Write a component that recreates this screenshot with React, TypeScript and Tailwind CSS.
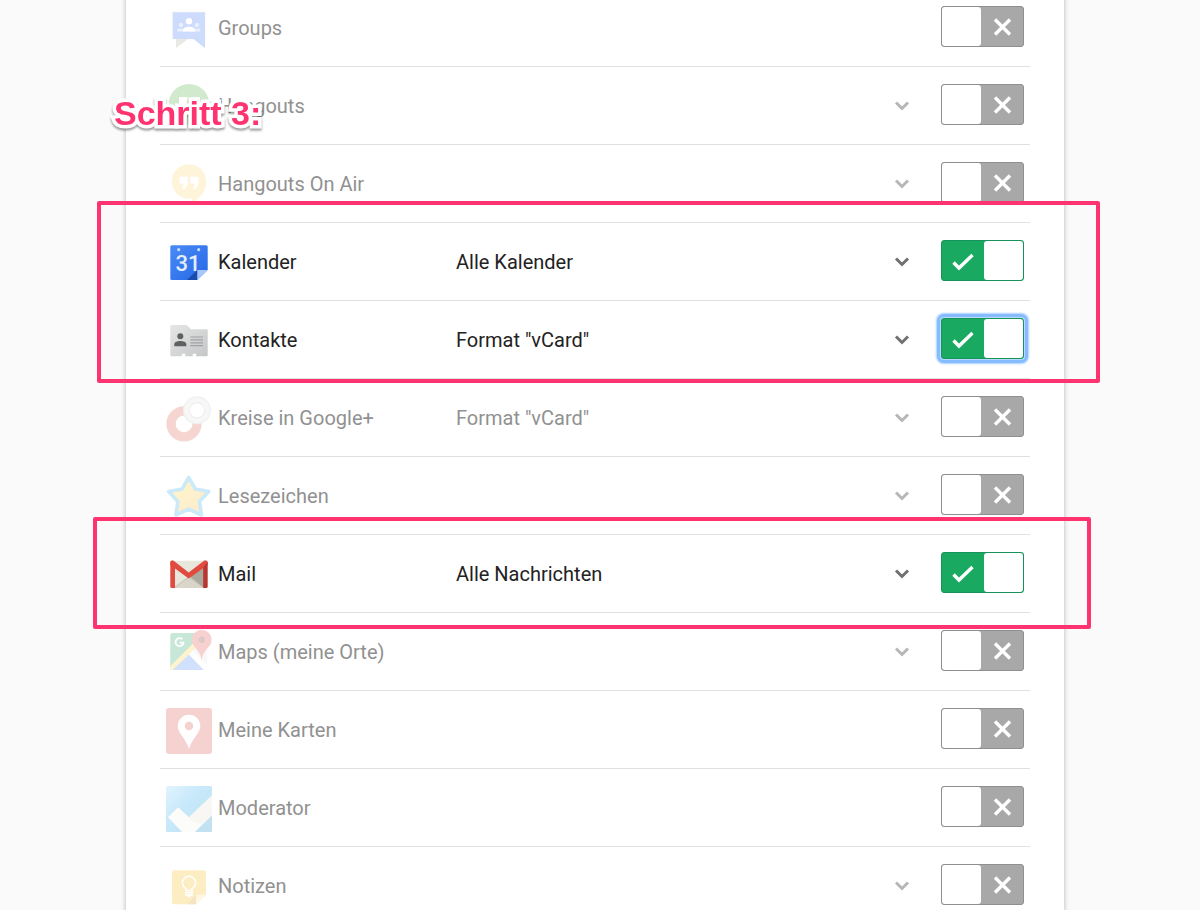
import React, { useState } from 'react';

interface Product {
  id: string;
  name: string;
  detail?: string;
  expandable: boolean;
  icon: React.ReactNode;
}

const GroupsIcon = () => (
  <>
    <path d="M5.500 4.500h35v30h-35z" fill="#d8d5b8" opacity=".25" />
    <path d="M10 33h12l-12 9z" fill="#a5a59c" />
    <path d="M6.700 6.300H39v36L27.500 33H6.700z" fill="#3b78f5" />
    <circle cx="23" cy="15.300" r="3.200" fill="#fff" />
    <circle cx="15" cy="18.900" r="2.200" fill="#fff" opacity=".6" />
    <circle cx="31" cy="18.900" r="2.200" fill="#fff" opacity=".6" />
    <path d="M11.300 22.800h23v2.600h-23z" fill="#fff" opacity=".6" />
    <path d="M17 25.400v-1.400c0-4.500 12-4.500 12 0v1.400z" fill="#fff" />
  </>
);

const HangoutsIcon = () => (
  <>
    <path d="M23 0a20.500 20.500 0 0 1 20.500 20.500C43.500 32 35 41 26 46v-5h-3A20.500 20.500 0 0 1 23 0z" fill="#4caf3c" />
    <path d="M13 13h8.500v9L18 28h-4l3-6h-4zM25 13h8.500v9L30 28h-4l3-6h-4z" fill="#fff" />
  </>
);

const OnAirIcon = () => (
  <>
    <path d="M23 2.200a17.300 17.300 0 0 1 17.300 17.300C40.300 29 34 37 26 41v-4.200h-3A17.300 17.300 0 0 1 23 2.200z" fill="#fcd670" />
    <path d="M13.500 14.700h8.300v7l-2.800 5h-3l2-5h-4.500zM24.200 14.700h8.300v7l-2.800 5h-3l2-5h-4.500z" fill="#fff" />
  </>
);

const CalendarIcon = () => (
  <>
    <defs>
      <linearGradient id="calendarBody" x1="0" y1="0" x2="1" y2="1">
        <stop offset="0" stopColor="#4a8af6" />
        <stop offset="1" stopColor="#2468e6" />
      </linearGradient>
    </defs>
    <path d="M5.800 5.300h34.400a1.500 1.500 0 0 1 1.500 1.500V30L31.300 40H5.800a1.500 1.500 0 0 1-1.500-1.500V6.800a1.500 1.500 0 0 1 1.500-1.500z" fill="url(#calendarBody)" />
    <circle cx="12.700" cy="9.700" r="1.600" fill="#c5dafc" />
    <circle cx="32.700" cy="9.700" r="1.600" fill="#c5dafc" />
    <text x="22" y="31" textAnchor="middle" fontSize="22" fontWeight="500" fontFamily="Roboto, sans-serif" fill="#e4edfc">31</text>
    <path d="M31.300 30v10H21z" fill="#1a4cad" />
    <path d="M31.300 30h10.400L31.300 40z" fill="#a9c7fa" />
  </>
);

const ContactsIcon = () => (
  <>
    <defs>
      <linearGradient id="contactsBody" x1="0" y1="0" x2="1" y2="1">
        <stop offset="0" stopColor="#e6e6e6" />
        <stop offset="1" stopColor="#c4c6c7" />
      </linearGradient>
    </defs>
    <path d="M5.500 7h15.200l4.300 4.300h15.500a1.200 1.200 0 0 1 1.200 1.200v24.600a1.200 1.200 0 0 1-1.200 1.200H30.200v-2.600h-3.400v2.600h-7.600v-2.600h-3.400v2.600H5.500a1.200 1.200 0 0 1-1.200-1.200V8.200A1.200 1.200 0 0 1 5.500 7z" fill="url(#contactsBody)" />
    <circle cx="14.300" cy="18.300" r="3" fill="#606060" />
    <path d="M8.300 28.300v-2c0-4.400 12-4.400 12 0v2z" fill="#606060" />
    <path d="M24.300 19H37M24.300 21.900H37M24.300 24.800H37M24.300 27.700H37" stroke="#a0a2a3" strokeWidth="1.200" />
  </>
);

const CirclesIcon = () => (
  <>
    <circle cx="18" cy="28.300" r="13" fill="none" stroke="#a9a9a9" strokeWidth="9" />
    <circle cx="18" cy="27.700" r="13" fill="none" stroke="#dc5a48" strokeWidth="9" />
    <circle cx="31" cy="14.300" r="14" fill="#c4c4c4" />
    <circle cx="31" cy="14.300" r="12.800" fill="#e3e3e3" />
    <circle cx="31" cy="14.300" r="8" fill="#b8b8b8" />
    <circle cx="31" cy="14.300" r="7" fill="#fff" />
  </>
);

const StarIcon = () => (
  <>
    <defs>
      <linearGradient id="starFill" x1="0" y1="0" x2="1" y2="1">
        <stop offset="0" stopColor="#ffe12c" />
        <stop offset="1" stopColor="#fbb040" />
      </linearGradient>
    </defs>
    <path
      d="M22.700 3.500L29.200 14.900L42.700 17.500L33.500 27.400L35.500 41L22.700 35.200L9.900 41L11.900 27.400L2.700 17.500L16.200 14.900z"
      fill="url(#starFill)"
      stroke="#2fb0e8"
      strokeWidth="3.6"
      strokeLinejoin="round"
    />
  </>
);

const MailIcon = () => (
  <>
    <path d="M6 8.700h34V36H6z" fill="#e9e6dc" />
    <path d="M22.700 24L38 14v22z" fill="#aaa99d" />
    <path d="M7.500 36l15.200-11L38 36z" fill="#d9d6c9" />
    <path d="M7.500 36l15.200-11L38 36" fill="none" stroke="#b9b6a9" strokeWidth=".7" />
    <path d="M4.300 10a1.500 1.500 0 0 1 1.500-1.500h1.500L22.700 20.500 38.300 8.500h1.900a1.500 1.500 0 0 1 1.500 1.500v3L22.700 26.500 4.300 13z" fill="#e04a3f" />
    <path d="M4.300 10l4.700 5v21H5.800a1.500 1.500 0 0 1-1.500-1.500z" fill="#e04a3f" />
    <path d="M41.700 10L37.200 15.500V36h3a1.500 1.500 0 0 0 1.500-1.500z" fill="#b93530" />
  </>
);

const MapsIcon = () => (
  <>
    <defs>
      <clipPath id="mapsSquare">
        <rect x="4.300" y="3" width="37" height="37" rx="2.500" />
      </clipPath>
    </defs>
    <g clipPath="url(#mapsSquare)">
      <path d="M4 3h38v37H4z" fill="#e6e6e6" />
      <path d="M4 3h37L4 40z" fill="#23a566" />
      <path d="M4 36.500L29 11.500l2 5L7 40H4z" fill="#fdd23c" />
      <path d="M6.500 40L23 24.500 38 40z" fill="#4a86f7" />
      <path d="M23 24.500l4-4L42 36v4h-4z" fill="#fff" />
    </g>
    <path d="M16.300 9.300a4 4 0 1 0 1.200 3.400h-3.800" fill="none" stroke="#fff" strokeWidth="1.800" />
    <path d="M35.700-.2a9.900 9.900 0 0 1 9.900 9.900c0 8-8.400 9-9.900 21-1.500-12-9.900-13-9.900-21a9.900 9.900 0 0 1 9.900-9.900z" fill="#e04c43" />
    <circle cx="35.700" cy="9.700" r="3.200" fill="#7e2d28" />
  </>
);

const MyMapsIcon = () => (
  <>
    <rect width="46" height="46" rx="3" fill="#db4a45" />
    <path d="M23 6.700a11.300 11.300 0 0 1 11.300 11.300c0 7.500-8.800 13-11.300 23-2.500-10-11.300-15.500-11.300-23A11.300 11.300 0 0 1 23 6.700z" fill="#fff" />
    <circle cx="23" cy="18" r="4.200" fill="#db4a45" />
  </>
);

const ModeratorIcon = () => (
  <>
    <defs>
      <linearGradient id="moderatorSky" x1="0" y1="0" x2="1" y2="1">
        <stop offset="0" stopColor="#8fd4fb" />
        <stop offset=".4" stopColor="#26abf0" />
        <stop offset="1" stopColor="#0a86c4" />
      </linearGradient>
    </defs>
    <rect width="46" height="46" rx="1.500" fill="url(#moderatorSky)" />
    <path d="M2 31.300l10-10 11 10L46 9.500V29L29 46H16z" fill="#f6f5ef" />
    <path d="M23 31.300L46 9.500V29l-8 8c-6 1.500-11 0-15-5.700z" fill="#e4e2d6" />
  </>
);

const KeepIcon = () => (
  <>
    <path d="M8 6.300h30a2 2 0 0 1 2 2v22.400l-10 9.600H8a2 2 0 0 1-2-2v-30a2 2 0 0 1 2-2z" fill="#f9b916" />
    <path d="M30 30.700v9.600h-9z" fill="#dd9a10" />
    <path d="M30 30.700h10l-10 9.600z" fill="#fde08a" />
    <path
      d="M20 26.500v-1.800a6.600 6.600 0 1 1 6 0v1.800zM20 26.500v4.500h6v-4.500M20 28.800h6M21.500 32.500h3"
      fill="none"
      stroke="#fff"
      strokeWidth="1.500"
    />
  </>
);

const products: Product[] = [
  { id: 'groups', name: 'Groups', expandable: false, icon: <GroupsIcon /> },
  { id: 'hangouts', name: 'Hangouts', expandable: true, icon: <HangoutsIcon /> },
  { id: 'onair', name: 'Hangouts On Air', expandable: true, icon: <OnAirIcon /> },
  { id: 'kalender', name: 'Kalender', detail: 'Alle Kalender', expandable: true, icon: <CalendarIcon /> },
  { id: 'kontakte', name: 'Kontakte', detail: 'Format "vCard"', expandable: true, icon: <ContactsIcon /> },
  { id: 'kreise', name: 'Kreise in Google+', detail: 'Format "vCard"', expandable: true, icon: <CirclesIcon /> },
  { id: 'lesezeichen', name: 'Lesezeichen', expandable: true, icon: <StarIcon /> },
  { id: 'mail', name: 'Mail', detail: 'Alle Nachrichten', expandable: true, icon: <MailIcon /> },
  { id: 'maps', name: 'Maps (meine Orte)', expandable: true, icon: <MapsIcon /> },
  { id: 'karten', name: 'Meine Karten', expandable: false, icon: <MyMapsIcon /> },
  { id: 'moderator', name: 'Moderator', expandable: false, icon: <ModeratorIcon /> },
  { id: 'notizen', name: 'Notizen', expandable: true, icon: <KeepIcon /> },
];

interface ToggleProps {
  id: string;
  checked: boolean;
  focused: boolean;
  onChange: () => void;
  onFocus: () => void;
}

const Toggle: React.FC<ToggleProps> = ({ id, checked, focused, onChange, onFocus }) => (
  <label
    htmlFor={id}
    className={`relative flex h-[41px] w-[83px] cursor-pointer rounded-[3px] border ${
      checked ? 'justify-end border-[#16935a] bg-[#1aa961]' : 'justify-start border-[#8f8f8f] bg-[#a8a8a8]'
    } ${focused ? 'shadow-[0_0_0_1px_#b9d9ff,0_0_0_4px_#86bcff,0_0_2px_5px_#a9d0ff]' : ''}`}
  >
    <input id={id} type="checkbox" checked={checked} onChange={onChange} onFocus={onFocus} className="sr-only" />
    {checked && (
      <svg viewBox="0 0 42 39" className="h-full flex-1" fill="none" stroke="#fff" strokeWidth="3.4">
        <path d="M11.500 21.500l5.500 5.500L30.500 14" />
      </svg>
    )}
    <span className="h-full w-[39px] rounded-[3px] bg-white" />
    {!checked && (
      <svg viewBox="0 0 42 39" className="h-full flex-1" fill="none" stroke="#fff" strokeWidth="3.4">
        <path d="M14 12.500l15 15M29 12.500l-15 15" />
      </svg>
    )}
  </label>
);

const App: React.FC = () => {
  const [selected, setSelected] = useState<string[]>(['kalender', 'kontakte', 'mail']);
  const [focused, setFocused] = useState('kontakte');

  const toggle = (id: string) => {
    setSelected(prev => (prev.includes(id) ? prev.filter(item => item !== id) : [...prev, id]));
  };

  return (
    <div className="relative h-screen overflow-hidden bg-[#fafafa] pr-2.5 font-[Roboto,sans-serif]">
      <main className="mx-auto max-w-[938px] bg-white px-[34px] shadow-[0_0_5px_rgba(0,0,0,0.28)]">
        <ul className="-mt-[11px]">
          {products.map(product => {
            const active = selected.includes(product.id);
            return (
              <li key={product.id} className="flex h-[78px] items-center border-b border-[#e0e0e0] px-1.5">
                <div className="pt-[3px]">
                  <svg viewBox="0 0 46 46" className={`size-[46px] overflow-visible ${active ? '' : 'opacity-25'}`} aria-hidden="true">
                    {product.icon}
                  </svg>
                </div>
                <label
                  htmlFor={product.id}
                  className={`ml-1.5 w-[238px] text-[20px] leading-6 ${active ? 'text-[#222]' : 'text-[#919191]'}`}
                >
                  {product.name}
                </label>
                <span className={`flex-1 text-[20px] leading-6 ${active ? 'text-[#222]' : 'text-[#919191]'}`}>{product.detail}</span>
                {product.expandable && (
                  <button type="button" aria-label={`${product.name} Optionen`} className="mr-[31px] cursor-pointer">
                    <svg
                      viewBox="0 0 16 16"
                      className={`size-4 ${active ? 'text-[#707070]' : 'text-[#b7b7b7]'}`}
                      fill="none"
                      stroke="currentColor"
                      strokeWidth="3"
                    >
                      <path d="M2 4.500l6 6 6-6" />
                    </svg>
                  </button>
                )}
                <div className="pb-0.5">
                  <Toggle
                    id={product.id}
                    checked={active}
                    focused={focused === product.id}
                    onChange={() => toggle(product.id)}
                    onFocus={() => setFocused(product.id)}
                  />
                </div>
              </li>
            );
          })}
        </ul>
      </main>

      {/* Tutorial markers */}
      <div className="pointer-events-none absolute top-[201px] right-[100px] left-[97px] h-[182px] rounded-[2px] border-4 border-[#ff3370]" />
      <div className="pointer-events-none absolute top-[517px] right-[109px] left-[93px] h-[112px] rounded-[2px] border-4 border-[#ff3370]" />
      <h1 className="pointer-events-none absolute top-[93px] left-[114px] font-['Liberation_Sans',Arial,sans-serif] text-[34px] leading-10 font-bold text-[#ff3370] drop-shadow-[0_2px_1px_rgba(0,0,0,0.4)] [-webkit-text-stroke:7px_white] [paint-order:stroke_fill]">
        Schritt 3:
      </h1>
    </div>
  );
};

export default App;
